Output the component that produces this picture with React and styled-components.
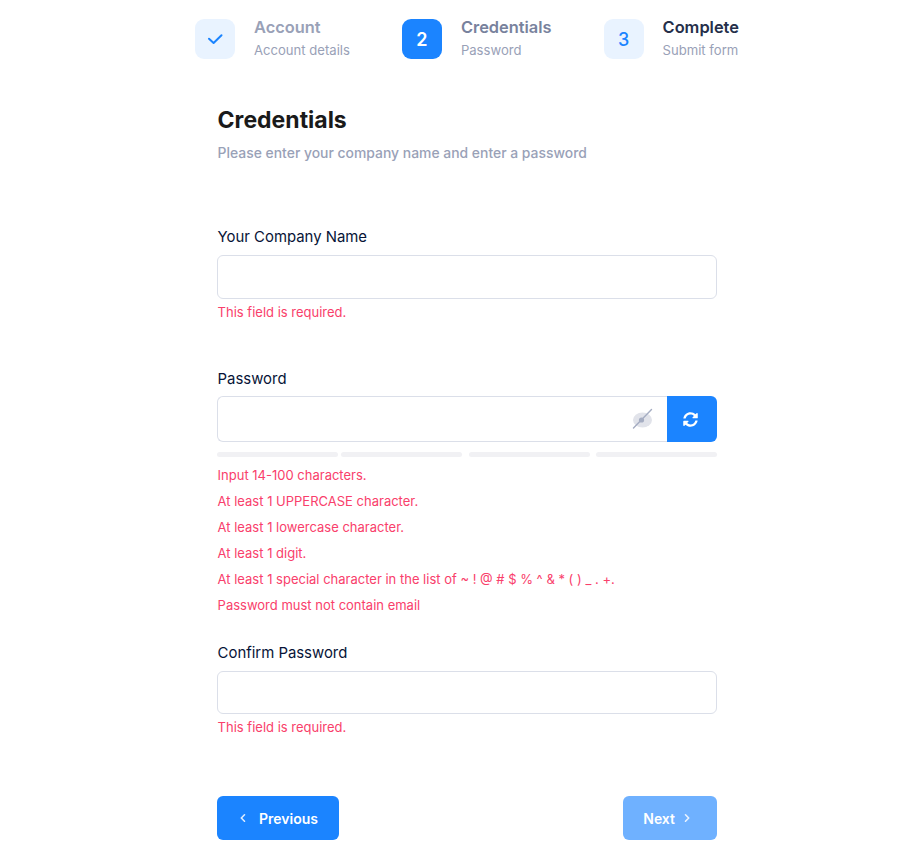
import styled, { createGlobalStyle, css } from "styled-components";
import { FaSyncAlt } from "react-icons/fa";

const steps = [
    { id: 1, title: "Account", sub: "Account details", state: "done" },
    { id: 2, title: "Credentials", sub: "Password", state: "current" },
    { id: 3, title: "Complete", sub: "Submit form", state: "pending" },
];

const rules = [
    "Input 14-100 characters.",
    "At least 1 UPPERCASE character.",
    "At least 1 lowercase character.",
    "At least 1 digit.",
    "At least 1 special character in the list of ~ ! @ # $ % ^ & * ( ) _ . +.",
    "Password must not contain email",
];

const Check = () => (
    <svg width="16" height="16" viewBox="0 0 16 16" fill="none" stroke="currentColor" strokeWidth="2" strokeLinecap="round" strokeLinejoin="round">
        <path d="M2 7.7 6.6 12 14.5 4.3" />
    </svg>
);

const Chevron = ({ left }) => (
    <ChevronIcon width="8" height="10" viewBox="0 0 8 10" fill="none" stroke="currentColor" strokeWidth="1.6" strokeLinecap="round" strokeLinejoin="round">
        <path d={left ? "M5.5 1.8 2.3 5 5.5 8.2" : "M2.5 1.8 5.7 5 2.5 8.2"} />
    </ChevronIcon>
);

const EyeSlash = () => (
    <EyeIcon width="21" height="22" viewBox="0 0 21 22" fill="none">
        <ellipse cx="10.5" cy="12" rx="9.5" ry="7.5" fill="#e1e3ea" />
        <circle cx="9.5" cy="12" r="2.6" fill="#a5adc2" />
        <path d="M1.5 20 19.5 1.5" stroke="#a5adc2" strokeWidth="1.4" strokeLinecap="round" />
    </EyeIcon>
);

export default function App() {
    return (
        <Page>
            <GlobalStyle />
            <Stepper>
                {steps.map((step) => (
                    <Step key={step.id}>
                        <StepIcon $state={step.state}>
                            {step.state === "done" ? <Check /> : step.id}
                        </StepIcon>
                        <div>
                            <StepTitle $state={step.state}>{step.title}</StepTitle>
                            <StepSub>{step.sub}</StepSub>
                        </div>
                    </Step>
                ))}
            </Stepper>

            <Form>
                <Heading>Credentials</Heading>
                <Lead>Please enter your company name and enter a password</Lead>

                <CompanyField>
                    <Label>Your Company Name</Label>
                    <Input type="text" />
                    <Error>This field is required.</Error>
                </CompanyField>

                <PasswordField>
                    <Label $tight>Password</Label>
                    <InputGroup>
                        <GroupInput type="password" />
                        <EyeSlash />
                        <Generate type="button"><FaSyncAlt /></Generate>
                    </InputGroup>
                    <Meter>
                        <span /><span /><span /><span />
                    </Meter>
                    <Rules>
                        {rules.map((rule) => <li key={rule}>{rule}</li>)}
                    </Rules>
                </PasswordField>

                <ConfirmField>
                    <Label>Confirm Password</Label>
                    <Input type="password" $short />
                    <Error>This field is required.</Error>
                </ConfirmField>

                <Actions>
                    <Button type="button"><Chevron left /> Previous</Button>
                    <Button type="button" $next>Next <Chevron /></Button>
                </Actions>
            </Form>
        </Page>
    );
}

const GlobalStyle = createGlobalStyle`
    * { box-sizing: border-box; }
    body {
        margin: 0;
        background: #ffffff;
        font-family: Inter, "Liberation Sans", sans-serif;
    }
`

// form text sits a hair right of the input borders
const textInset = css`
    padding-left: 0.6px;
`

const Page = styled.div`
    width: 913px;
    height: 860px;
    overflow: hidden;
    padding: 19px 0 0 195px;
`

const Stepper = styled.div`
    display: flex;
    gap: 52px;
    white-space: nowrap;
`

const Step = styled.div`
    display: flex;
    gap: 19px;
    height: 40px;
`

const StepIcon = styled.div`
    width: 40px;
    height: 40px;
    border-radius: 9px;
    display: flex;
    align-items: center;
    justify-content: center;
    background: ${(p) => (p.$state === "current" ? "#1b84ff" : "#e9f3ff")};
    color: ${(p) => (p.$state === "current" ? "#ffffff" : "#1b84ff")};
    font-size: 18px;
    font-weight: ${(p) => (p.$state === "current" ? 600 : 500)};
`

const StepTitle = styled.div`
    margin-top: -1px;
    font-size: 16.4px;
    line-height: 18px;
    font-weight: 600;
    color: ${(p) => ({ done: "#99a1b7", current: "#78829d", pending: "#252f4a" }[p.$state])};
`

const StepSub = styled.div`
    margin-top: 6px;
    font-size: 13.1px;
    line-height: 16px;
    font-weight: 400;
    color: #99a1b7;
`

const Form = styled.form`
    width: 500px;
    margin: 47px 0 0 22px;
`

const Heading = styled.h2`
    ${textInset}
    margin: 0;
    font-size: 23px;
    line-height: 28px;
    font-weight: 700;
    color: #1a1a1a;
`

const Lead = styled.p`
    ${textInset}
    margin: 9px 0 0;
    font-size: 13.92px;
    line-height: 20px;
    font-weight: 500;
    color: #99a1b7;
`

const CompanyField = styled.div`
    margin-top: 65px;
`

const PasswordField = styled.div`
    margin-top: 49px;
`

const ConfirmField = styled.div`
    margin-top: 22px;
`

const Label = styled.label`
    ${textInset}
    display: block;
    margin-bottom: ${(p) => (p.$tight ? "8px" : "9px")};
    font-size: 14.9px;
    line-height: 18px;
    font-weight: 400;
    color: #071437;
`

const Input = styled.input`
    display: block;
    width: 100%;
    height: ${(p) => (p.$short ? "43px" : "44px")};
    border: 1px solid #dbdfe9;
    border-radius: 6px;
    background: #ffffff;
    outline: none;
`

const Error = styled.div`
    ${textInset}
    margin-top: 4px;
    font-size: 13px;
    line-height: 18px;
    color: #f9406b;
`

const InputGroup = styled.div`
    position: relative;
    display: flex;
    height: 46px;
`

const GroupInput = styled.input`
    flex: 1;
    min-width: 0;
    border: 1px solid #dbdfe9;
    border-right: 0;
    border-radius: 6px 0 0 6px;
    outline: none;
`

const EyeIcon = styled.svg`
    position: absolute;
    right: 64px;
    top: 12px;
`

const Generate = styled.button`
    width: 50px;
    padding: 0 4px 0 0;
    border: 0;
    border-radius: 0 6px 6px 0;
    background: #1b84ff;
    color: #ffffff;
    font-size: 15px;
    display: flex;
    align-items: center;
    justify-content: center;
`

const Meter = styled.div`
    display: flex;
    justify-content: space-between;
    margin-top: 10px;

    span {
        width: 121px;
        height: 5px;
        border-radius: 3px;
        background: #f1f1f4;
    }

    span:nth-child(2) {
        margin-left: -2px;
        margin-right: 2px;
    }

    span:nth-child(3) {
        margin-left: -0.5px;
        margin-right: 0.5px;
    }
`

const Rules = styled.ul`
    list-style: none;
    margin: 9px 0 0;
    padding: 0;

    li {
        ${textInset}
        height: 26px;
        font-size: 13px;
        line-height: 18px;
        color: #f9406b;
    }
`

const Actions = styled.div`
    display: flex;
    justify-content: space-between;
    margin-top: 60px;
`

const ChevronIcon = styled.svg`
    opacity: 0.85;
`

const Button = styled.button`
    display: flex;
    align-items: center;
    gap: ${(p) => (p.$next ? "8px" : "12px")};
    height: 44px;
    padding: ${(p) => (p.$next ? "0 26px 0 20px" : "0 21px 0 22px")};
    border: 0;
    border-radius: 6px;
    background: ${(p) => (p.$next ? "#6fb1ff" : "#1b84ff")};
    color: #ffffff;
    font-family: inherit;
    font-size: 14px;
    font-weight: 600;
`
